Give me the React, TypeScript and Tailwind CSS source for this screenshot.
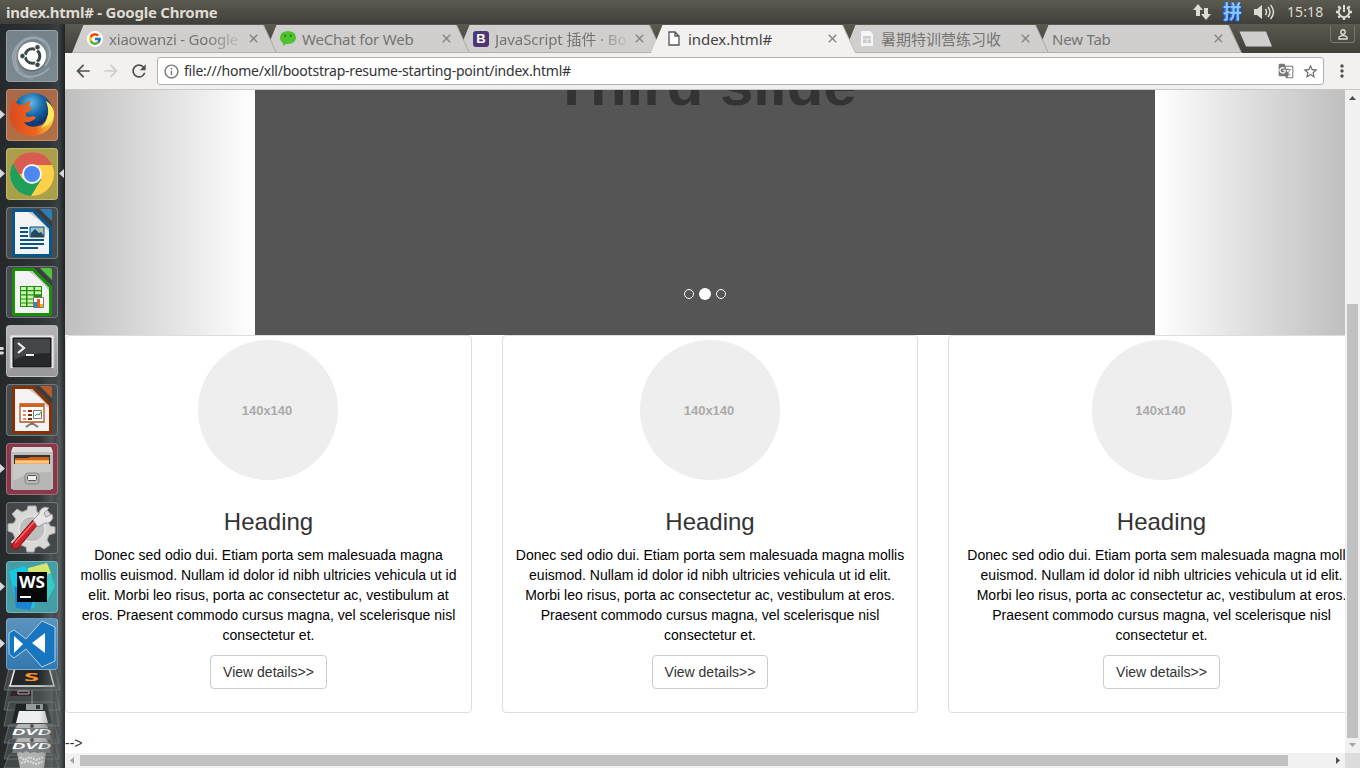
import React from "react";
import { MdArrowBack, MdArrowForward, MdRefresh, MdInfoOutline, MdStarBorder, MdMoreVert, MdGTranslate } from "react-icons/md";
import { FcGoogle } from "react-icons/fc";

const UI = "font-['Noto_Sans','Noto_Sans_CJK_SC',sans-serif]";

function TitleBar() {
  return (
    <header className="flex h-6 shrink-0 items-center justify-between bg-linear-to-b from-[#5c5a50] to-[#403f3a] pl-1.5 pr-[7px] text-[#dfdbd2]">
      <span className="text-[15px] font-bold leading-6 tracking-[-0.24px]">index.html# - Google Chrome</span>
      <div className="flex items-center">
        <svg className="mr-3" width="18" height="18" viewBox="0 0 18 18" fill="#dfdbd2">
          <path d="M5 1 10 7H7v6H3V7H0zM13 17 8 11h3V5h4v6h3z" />
        </svg>
        <span className="mr-3 text-[19px] font-bold leading-6 text-[#8cc4ff] [text-shadow:1px_1px_0_#0b50c4,-1px_0_0_#1766d8]">拼</span>
        <svg className="mr-3" width="21" height="18" viewBox="0 0 21 18">
          <path d="M0 6h3l5-4v14l-5-4H0z" fill="#dfdbd2" />
          <path d="M11.5 6q2 3 0 6M14 4q4 5 0 10M16.5 2q6 7 0 14" fill="none" stroke="#dfdbd2" strokeWidth="1.5" />
        </svg>
        <span className="mr-[11px] w-[37px] whitespace-nowrap text-[14px] leading-6 tracking-[0.1px]">15:18</span>
        <svg width="18" height="18" viewBox="0 0 18 18" fill="none" stroke="#dfdbd2">
          <path d="M6 4.5a5.3 5.3 0 1 0 6 0" strokeWidth="2" />
          <path d="M9 2v7" strokeWidth="2" />
          <path d="M1 9h2M15 9h2M3.3 3.3l1.5 1.5M13.2 4.8l1.5-1.5M3.3 14.7l1.5-1.5M13.2 13.2l1.5 1.5M9 15v2" strokeWidth="2.4" />
        </svg>
      </div>
    </header>
  );
}

function Tile({ bg, left, right, children }: { bg: string; left?: number; right?: boolean; children: React.ReactNode }) {
  return (
    <div className="relative h-[52px] w-[52px] shrink-0">
      <div className={`h-full w-full overflow-hidden rounded-[4px] border border-white/25 ${bg}`}>
        <svg className="-m-px max-w-none" width="52" height="52" viewBox="0 0 52 52">{children}</svg>
      </div>
      {left === 1 && <svg className="absolute -left-1.5 top-[21px]" width="5" height="9" viewBox="0 0 5 9"><path d="M0 0 5 4.5 0 9z" fill="#d8d8d8" /></svg>}
      {left === 2 && <svg className="absolute -left-1.5 top-[22px]" width="5" height="8" viewBox="0 0 5 8"><path d="M0 0h3l1 1.5L3 3H0zM0 4.5h3l1 1.5-1 1.5H0z" fill="#d8d8d8" /></svg>}
      {right && <svg className="absolute -right-1.5 top-[21px]" width="5" height="9" viewBox="0 0 5 9"><path d="M5 0 0 4.5 5 9z" fill="#d8d8d8" /></svg>}
    </div>
  );
}

function DocPage({ color, corner }: { color: string; corner: string }) {
  return (
    <>
      <path d="M8 2h20l18 18v28a2 2 0 0 1-2 2H8a2 2 0 0 1-2-2V4a2 2 0 0 1 2-2z" fill={color} />
      <path d="M9 5h17l17 17v25H9z" fill="#f3f3f3" />
      <path d="M26 5 43 22v3Q35 13 22 5z" fill="#c4c4c4" />
      <path d="M28 2h5l13 13v5z" fill="#3a3d3f" />
      <path d="M34 2h10a2 2 0 0 1 2 2v10z" fill={corner} />
    </>
  );
}

function Launcher() {
  return (
    <aside className="relative flex w-[65px] shrink-0 flex-col gap-[7px] overflow-hidden bg-[linear-gradient(to_right,#25292c_0%,#303538_75%,#3a3f42_90%,#1f2325_100%)] pl-1.5 pt-1.5">
      <div className="absolute bottom-0 right-0 h-[470px] w-[26px] bg-[linear-gradient(to_right,transparent,#6b707255_30%,#7a7f8166_50%,#54595b66_60%,#85898b66_80%,#3a3e4066)] [mask-image:linear-gradient(to_bottom,transparent,black_30%)]" />
      <Tile bg="bg-linear-to-b from-[#75828a] to-[#7b8990]">
        <g fill="none" stroke="#c4ccd0" opacity=".5">
          <path d="M12 40C3 20 17 7 30 8s19 16 9 28M7 29c0 20 24 23 36 9M38 12C20-2 4 20 7 30" strokeWidth="1.5" />
          <path d="M24 8C36 5 46 17 42 29M10 21c-4 13 4 26 17 27" strokeWidth="4" opacity=".4" />
        </g>
        <circle cx="26" cy="27.500" r="14" fill="#333" opacity=".35" />
        <circle cx="26" cy="26" r="14" fill="#fff" />
        <circle cx="26.5" cy="26" r="7.3" fill="none" stroke="#3b474b" strokeWidth="3" strokeDasharray="13.3 2" strokeDashoffset="6.7" />
        <g fill="#3b474b" stroke="#fff" strokeWidth=".8"><circle cx="16.5" cy="26" r="2.7" /><circle cx="31.5" cy="17.2" r="2.7" /><circle cx="31.5" cy="34.8" r="2.7" /></g>
      </Tile>
      <Tile bg="bg-linear-to-b from-[#a8694b] to-[#b17042]" left={1}>
        <defs>
          <radialGradient id="globe" cx=".45" cy=".25"><stop stopColor="#61bce8" /><stop offset=".6" stopColor="#1769a8" /><stop offset="1" stopColor="#123b75" /></radialGradient>
          <linearGradient id="fox" x1="0" x2="1"><stop stopColor="#dc4a20" /><stop offset=".6" stopColor="#ec691f" /><stop offset="1" stopColor="#ffd93a" /></linearGradient>
        </defs>
        <circle cx="27" cy="24" r="20" fill="url(#globe)" />
        <path d="M8 9c-2 4-4 10-4 18 0 12 10 20 22 20s22-9 22-21c0-7-4-12-8-14 3 6 3 12 1 16-1 5-4 8-9 9-6 2-12 0-14-4 4 1 7 0 12-4-1-2-4-2-6-1-3 0-5-1-4-4l6-4c0-2-2-3-4-3l3-5c-4 0-6 2-7 4-2-1-4-1-5 0-3-2-4-4-5-7z" fill="url(#fox)" />
        <path d="M40 12c4 10 3 19-5 27 8-2 12-7 13-14 0-6-4-10-8-13z" fill="#ffe85e" />
      </Tile>
      <Tile bg="bg-[#aaa049]" left={1} right>
        <circle cx="26" cy="26" r="22" fill="#ffd04a" />
        <path d="M7 15A22 22 0 0 0 25 48L35.5 31H16.5z" fill="#1f9f5a" />
        <path d="M7 15a22 22 0 0 1 38.2 0l.8 2H26v9H13z" fill="#d95c51" />
        <circle cx="26" cy="26" r="10" fill="#f2f2f2" /><circle cx="26" cy="26" r="8" fill="#4b87ef" />
      </Tile>
      <Tile bg="bg-[#464c50]">
        <DocPage color="#07578a" corner="#2a80b5" />
        <path d="M14 21h8M14 25h8M14 29h8M14 33h24M14 37h24M14 41h18" stroke="#0c547f" strokeWidth="2" />
        <path d="M24 20h14v10H24z" fill="#86c7ed" stroke="#174c6d" /><path d="M25 30v-4l4-4 4 4 2-1 3 4v1z" fill="#29475a" /><circle cx="35" cy="23" r="1.6" fill="#f2bd36" />
      </Tile>
      <Tile bg="bg-[#464c50]">
        <DocPage color="#1c8f0a" corner="#51c33f" />
        <path d="M14 20h22v21H14z" fill="#238d12" />
        <path d="M15 21h5v3h-5zM21.500 21h6v3h-6zM29 21h6v3h-6zM15 25.200h5v3h-5zM21.500 25.200h6v3h-6zM29 25.200h6v3h-6zM15 29.400h5v3h-5zM21.500 29.400h6v3h-6zM15 33.600h5v3h-5zM21.500 33.600h6v3h-6zM15 37.500h5v2.500h-5zM21.500 37.500h6v2.500h-6z" fill="#c8f5ad" />
        <path d="M27.500 31.500h10v10h-10z" fill="#fff" stroke="#777" /><path d="M28 36h3v5h-3z" fill="#2d86c9" /><path d="M31 33h3v8h-3z" fill="#e95d18" /><path d="M34 38h3v3h-3z" fill="#f4b400" />
      </Tile>
      <Tile bg="bg-linear-to-b from-[#b4b4b6] to-[#98989a]" left={2}>
        <path d="M4 10h44v36H4z" fill="#e8e8e8" stroke="#bcbcbc" /><path d="M4 43h44v4H4z" fill="#999" />
        <path d="M7 13h38v29H7z" fill="#26282a" stroke="#111" /><path d="M8 14h36v14Q20 28 8 35z" fill="#55585a" opacity=".65" />
        <path d="m12 18 6 5-6 5M20 30h8" fill="none" stroke="#eee" strokeWidth="2.2" />
      </Tile>
      <Tile bg="bg-[#464c50]">
        <DocPage color="#863204" corner="#b85a25" />
        <path d="M14 20h24v18H14z" fill="#fff" stroke="#bf4d12" strokeWidth="1.3" /><path d="M14 20h24v3H14z" fill="#cf651f" />
        <path d="M17 27h3M17 31h3M17 35h3" stroke="#e28a64" strokeWidth="2" /><path d="M22 27h4M22 31h4M22 35h4" stroke="#852d0a" strokeWidth="2" />
        <path d="M27.500 26.500h8v8h-8z" fill="#fff" stroke="#777" /><path d="m29 32 2-2 2 1 2-3" fill="none" stroke="#29a329" />
        <path d="M26 38v3m0-2-6 4M26 39l6 4" stroke="#777" strokeWidth="2" />
      </Tile>
      <Tile bg="bg-[#87384a]" left={1}>
        <path d="M7 4h38l2 6v36H5V10z" fill="#bdbdba" /><path d="M7 4h38l2 5H5z" fill="#deddda" /><path d="M8 12h36v12H8z" fill="#333" />
        <path d="M9 15h13l2-1h19v8H9z" fill="#ce6119" /><path d="M9 17h34v6H9z" fill="#f3ad5d" /><path d="M9 19h34" stroke="#ffe0a4" />
        <path d="M7 21h38v26H7z" fill="#b6b6b4" /><path d="M7 21h38v8q-24 0-38 9z" fill="#d6d6d4" opacity=".6" />
        <rect x="19" y="30" width="14" height="11" rx="3" fill="#b8b8b8" stroke="#858585" /><rect x="21.500" y="32.500" width="9" height="5" rx="1" fill="#eee" stroke="#555" />
      </Tile>
      <Tile bg="bg-[#44484a]">
        <path d="M22 4h8l1 6 5 2 5-4 5 6-4 5 2 5 5 1v6l-6 2-2 5 3 5-6 4-5-3-4 2-1 4h-7l-1-5-5-2-5 3-5-6 4-4-2-5-5-2v-7l6-1 2-4-4-5 5-5 5 3 5-2z" fill="#d8d8d6" stroke="#aaa" />
        <circle cx="26" cy="27" r="13" fill="#bdbebe" stroke="#eee" />
        <path d="m7 41 20-23 5 4L13 45q-4 4-7 0-1-2 1-4z" fill="#cc2228" stroke="#8b1216" /><path d="M9 41 28 20" stroke="#f46d6c" strokeWidth="1.500" />
        <path d="m27 18 6-6q0-5 6-7l4 1-5 5 2 4 6-3 1 4q-3 6-8 5l-7 4z" fill="#e6e6e6" stroke="#999" />
      </Tile>
      <Tile bg="bg-[#459da5]" left={1}>
        <path d="M3 10 18 5l15 9-5 33-17-1z" fill="#16c8df" /><path d="M8 25 28 37 24 49 10 47z" fill="#1c83d1" /><path d="m24 7 17-5 8 23-8 15-24 1z" fill="#38c8c8" /><path d="m22 7 19-5 4 10-22 8z" fill="#d5e56d" />
        <path d="M11 11h30v30H11z" fill="#050708" />
        <text x="13" y="26.500" fill="#fff" fontFamily="Noto Sans, sans-serif" fontWeight="700" fontSize="16" textLength="26" lengthAdjust="spacingAndGlyphs">WS</text><path d="M14 36h11" stroke="#fff" strokeWidth="2" />
      </Tile>
      <div className="relative z-10 -mt-0.5">
        <Tile bg="bg-linear-to-b from-[#5d93bd] to-[#3278b0]" left={1}>
          <path d="m3 15 5-3 12 9L36 3l13 6v34l-13 6-16-18-12 9-5-4z" fill="#1676bf" stroke="#b7d3e8" />
          <path d="M8 18v17l9-9zM39 15v20L26 25z" fill="#fff" />
        </Tile>
      </div>
      <svg className="-ml-1.5 -mt-[10px] h-[102px] w-[65px] shrink-0" viewBox="0 0 65 102">
        <g fill="#53585a" stroke="#a2a6a8" strokeOpacity=".4" fillOpacity=".6">
          <path d="M9 1h46l5 22H4zM9 18h46l5 25H4zM9 35h46l4 24H4zM9 58h46l4 18H4zM9 73h46l4 19H4zM9 88h46l4 13H4z" />
        </g>
        <path d="M15 1h34l5 18H10z" fill="#24272a" stroke="#eee" strokeWidth="1.500" />
        <text x="24" y="14" fill="#ff9428" fontFamily="Noto Sans, sans-serif" fontSize="10" fontWeight="700" textLength="15" lengthAdjust="spacingAndGlyphs">S</text>
        <path d="M11 24h20v5H10z" fill="#35242d" /><path d="M18 24h11v3H18z" stroke="#aaa" fill="none" /><path d="M32 23v15" stroke="#8d9294" />
        <path d="M16 37h31l5 19H12z" fill="#202427" /><path d="M26 37h17v6H26z" fill="#969b9e" /><path d="M36 38h4v4h-4z" fill="#333" /><path d="M19 44h26l3 12H16z" fill="#eee" />
        <path d="M16 58h31l4 14H12zM16 72h31l4 14H12z" fill="#777c7e" /><path d="M18 57h28l2 4H16zM18 71h28l2 4H16z" fill="#b5b7b7" /><circle cx="32" cy="59" r="2" fill="#555" /><circle cx="32" cy="73" r="2" fill="#555" />
        <g fill="#fff" fontFamily="Liberation Sans, sans-serif" fontStyle="italic" fontWeight="700" fontSize="9"><text x="12" y="68" textLength="39" lengthAdjust="spacingAndGlyphs">DVD</text><text x="12" y="82" textLength="39" lengthAdjust="spacingAndGlyphs">DVD</text></g>
        <path d="m17 86 3-1 3 1 3-2 4 2 4-1 4 1 4-1 4 1-2 15H20z" fill="#aeb1af" /><path d="m20 90 5 3 5-3 6 3 8-3M21 96l8-2 7 3 8-3" fill="none" stroke="#ddd" strokeDasharray="2 1" strokeWidth="2" />
      </svg>
    </aside>
  );
}

interface TabProps { title: string; icon?: React.ReactNode; active?: boolean; fade?: boolean; z: string; track?: string }

function Tab({ title, icon, active, fade, z, track = "tracking-[-0.2px]" }: TabProps) {
  return (
    <div className={`relative -mr-3 flex h-[29px] w-[205px] shrink-0 items-center pl-[15px] ${z}`}>
      <svg className="absolute inset-0" width="205" height="29" viewBox="0 0 205 29">
        <path d="M0 29 11.500 1H191.500L204.500 29z" fill={active ? "#f2f1f0" : "#d0cfce"} />
        <path d="M191.500 1 204.500 29" fill="none" stroke={active ? "#bdbcba" : "#aaa9a7"} />
        {!active && <path d="M0 28.500H205" stroke="#b1b0ae" />}
      </svg>
      {icon && <span className="relative mr-1.5 flex h-4 w-4 items-center justify-center">{icon}</span>}
      <span className={`relative whitespace-nowrap text-[15px] leading-7 ${icon ? "w-[131px]" : "w-[153px]"} ${active ? "text-[#444]" : "text-[#757473]"} ${fade ? "[mask-image:linear-gradient(to_right,black_75%,transparent_105%)]" : ""} ${track}`}>{title}</span>
      <svg className="relative ml-[9px]" width="9" height="9" viewBox="0 0 9 9"><path d="m.8.8 7.400 7.400M8.200.8.8 8.200" stroke="#8b8a89" strokeWidth="1.600" /></svg>
    </div>
  );
}

const wechat = <svg width="16" height="15" viewBox="0 0 16 15"><path d="M8 0c4.500 0 8 2.800 8 6.500S12.500 13 8 13H6l-3 2v-3C1 11 0 8.700 0 6.500 0 2.800 3.500 0 8 0z" fill="#4fc22e" /><circle cx="5.300" cy="4.800" r="1" fill="#246b1a" /><circle cx="10.700" cy="4.800" r="1" fill="#246b1a" /></svg>;
const bootstrap = <span className="flex h-4 w-4 items-center justify-center rounded-[3px] bg-[#4e3576] font-['Liberation_Sans',sans-serif] text-[13px] font-bold leading-4 text-white">B</span>;
const page = <svg width="12" height="15" viewBox="0 0 12 15"><path d="M1 1h6l4 4v9H1zM7 1v4h4" fill="#fff" stroke="#555" strokeWidth="1.300" /></svg>;
const sheet = <svg width="12" height="15" viewBox="0 0 12 15"><path d="M0 0h9l3 3v12H0z" fill="#f5f5f5" /><path d="M2 5h8v7H2z" fill="#ccc" /><path d="M2 8h8M6 8v4" stroke="#eee" /></svg>;

function TabStrip() {
  return (
    <div className="isolate flex h-[29px] shrink-0 bg-linear-to-b from-[#5b5a50] to-[#403f3a] pl-[7px]">
      <Tab title="xiaowanzi - Google" icon={<span className="flex rounded-full bg-white p-px"><FcGoogle size={14} /></span>} fade z="z-[5]" />
      <Tab title="WeChat for Web" icon={wechat} z="z-[4]" />
      <Tab title="JavaScript 插件 · Bo" icon={bootstrap} fade z="z-[3]" track="tracking-[-0.1px]" />
      <Tab title="index.html#" icon={page} active z="z-[6]" track="tracking-[-0.05px]" />
      <Tab title="暑期特训营练习收" icon={sheet} z="z-[2]" track="tracking-normal" />
      <Tab title="New Tab" z="z-[1]" />
      <svg className="relative ml-[9px] mt-[7px]" width="34" height="17" viewBox="0 0 34 17"><path d="M.5.500H27L33 15.500H7z" fill="#d0cfce" /></svg>
      <div className="ml-auto mr-[5px] mt-0.5 flex h-[17px] w-[25px] items-center justify-center rounded-b-[3px] border border-t-0 border-[#77756c]">
        <svg width="10" height="11" viewBox="0 0 10 11" fill="none" stroke="#dfdbd2" strokeWidth="1.400"><circle cx="5" cy="3" r="2.200" /><path d="M1 10V8q4-3 8 0v2z" /></svg>
      </div>
    </div>
  );
}

function Toolbar() {
  return (
    <div className="flex h-[37px] shrink-0 items-center border-b border-[#c9c8c6] bg-[#f2f1f0] pl-2 pr-2">
      <MdArrowBack className="mr-2 shrink-0 text-[#505050]" size={20} />
      <MdArrowForward className="mr-2 shrink-0 text-[#cecdcc]" size={20} />
      <MdRefresh className="mr-2 shrink-0 text-[#505050]" size={20} />
      <div className="flex h-7 w-[1167px] shrink-0 items-center rounded-[3px] border border-[#b1b0ae] bg-white pl-[5px] pr-1">
        <MdInfoOutline className="mr-1 text-[#757575]" size={17} />
        <span className="text-[14px] leading-6 tracking-[-0.22px] text-[#333]">file:///home/xll/bootstrap-resume-starting-point/index.html#</span>
        <MdGTranslate className="ml-auto mr-2 text-[#777]" size={16} />
        <MdStarBorder className="text-[#666]" size={17} />
      </div>
      <MdMoreVert className="ml-2 shrink-0 text-[#505050]" size={20} />
    </div>
  );
}

const columns = [
  { width: "w-[407px]", shift: "mr-px", lines: ["Donec sed odio dui. Etiam porta sem malesuada magna", "mollis euismod. Nullam id dolor id nibh ultricies vehicula ut id", "elit. Morbi leo risus, porta ac consectetur ac, vestibulum at", "eros. Praesent commodo cursus magna, vel scelerisque nisl", "consectetur et."] },
  { width: "w-[416px]", shift: "", lines: ["Donec sed odio dui. Etiam porta sem malesuada magna mollis", "euismod. Nullam id dolor id nibh ultricies vehicula ut id elit.", "Morbi leo risus, porta ac consectetur ac, vestibulum at eros.", "Praesent commodo cursus magna, vel scelerisque nisl", "consectetur et."] },
  { width: "w-[427px]", shift: "", lines: ["Donec sed odio dui. Etiam porta sem malesuada magna mollis", "euismod. Nullam id dolor id nibh ultricies vehicula ut id elit.", "Morbi leo risus, porta ac consectetur ac, vestibulum at eros.", "Praesent commodo cursus magna, vel scelerisque nisl", "consectetur et."] },
];

function Page() {
  return (
    <main className="h-[663px] w-[1280px] overflow-hidden bg-white font-['Liberation_Sans',sans-serif] text-[14px] leading-5 text-black">
      <section className="flex h-[245px]">
        <div className="w-[190px] bg-linear-to-r from-[#bfbfbf] to-white" />
        <div className="flex w-[900px] flex-col items-center justify-between bg-[#555] pb-[35px]">
          <h1 className="-mt-[39px] text-[60px] font-bold leading-[68px] text-[#333]">Third slide</h1>
          <div className="flex items-center gap-[5px]">
            <i className="h-2.5 w-2.5 rounded-full border border-white" />
            <i className="h-3 w-3 rounded-full bg-white" />
            <i className="h-2.5 w-2.5 rounded-full border border-white" />
          </div>
        </div>
        <div className="w-[190px] bg-linear-to-r from-white to-[#bfbfbf]" />
      </section>
      <section className="flex gap-[30px]">
        {columns.map((c, i) => (
          <article key={i} className={`flex h-[378px] shrink-0 flex-col items-center rounded-[4px] border border-[#ddd] pt-1 ${c.width}`}>
            <div className={`flex h-[140px] w-[140px] items-center justify-center rounded-full bg-[#eee] pr-0.5 pt-0.5 text-[13px] font-bold text-[#aaa] ${c.shift}`}>140x140</div>
            <h3 className="mt-[29px] text-[24px] leading-[26px] text-[#333]">Heading</h3>
            <p className="mt-[10px] whitespace-nowrap text-center">
              {c.lines.map((l) => <span key={l} className="block">{l}</span>)}
            </p>
            <button className="mt-2.5 h-[34px] rounded-[4px] border border-[#ccc] bg-white px-3 text-[#333]">View details&gt;&gt;</button>
          </article>
        ))}
      </section>
      <p className="mt-5 text-[#333]">--&gt;</p>
    </main>
  );
}

function Arrow({ d, color }: { d: string; color: string }) {
  return <svg className="shrink-0" width="15" height="15" viewBox="0 0 15 15"><path d={d} fill={color} /></svg>;
}

export default function App() {
  return (
    <div className={`flex h-[768px] w-[1360px] flex-col overflow-hidden ${UI}`}>
      <TitleBar />
      <div className="flex h-[744px]">
        <Launcher />
        <div className="flex w-[1295px] flex-col">
          <TabStrip />
          <Toolbar />
          <div className="flex h-[663px]">
            <Page />
            <div className="flex w-[15px] flex-col justify-between bg-[#f1f1f1]">
              <Arrow d="M4 10 7.500 6 11 10z" color="#505050" />
              <div className="ml-0.5 mt-auto h-[434px] w-[11px] bg-[#c1c1c1]" />
              <Arrow d="M4 5 7.500 9 11 5z" color="#a3a3a3" />
            </div>
          </div>
          <div className="flex h-[15px] bg-[#f1f1f1]">
            <Arrow d="M9 4 5 7.500 9 11z" color="#a3a3a3" />
            <div className="mt-0.5 h-[11px] w-[1208px] bg-[#c1c1c1]" />
            <span className="flex-1" />
            <Arrow d="M6 4 10 7.500 6 11z" color="#505050" />
            <div className="w-[15px] bg-[#dcdcdc]" />
          </div>
        </div>
      </div>
    </div>
  );
}
